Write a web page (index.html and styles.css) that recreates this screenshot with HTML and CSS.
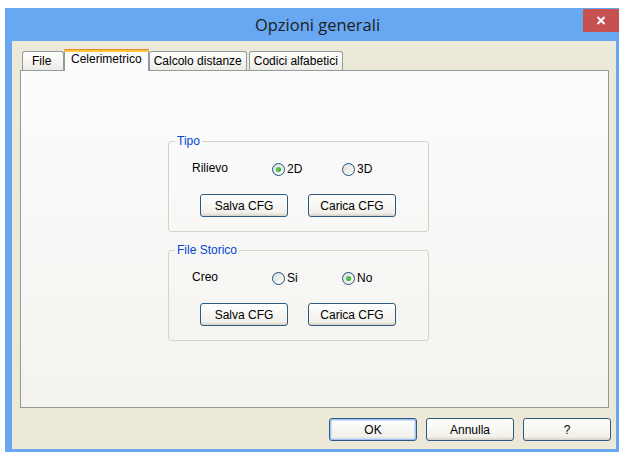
FILE: index.html
```html
<!DOCTYPE html>
<html lang="it">
<head>
<meta charset="utf-8">
<title>Opzioni generali</title>
<link rel="stylesheet" href="styles.css">
</head>
<body>
<div class="window">
  <div class="titlebar">
    <span class="title">Opzioni generali</span>
    <button class="close" aria-label="Chiudi">
      <svg width="10" height="9" viewBox="0 0 10 9"><path d="M1.5 1 L8.5 8 M8.5 1 L1.5 8" stroke="#fff" stroke-width="2" fill="none"/></svg>
    </button>
  </div>
  <div class="client">
    <div class="tabs">
      <div class="tab">File</div>
      <div class="tab active">Celerimetrico</div>
      <div class="tab">Calcolo distanze</div>
      <div class="tab">Codici alfabetici</div>
    </div>
    <div class="panel">
      <fieldset class="group">
        <legend>Tipo</legend>
        <div class="row">
          <span class="label">Rilievo</span>
          <span class="radio checked"><span class="dot"></span>2D</span>
          <span class="radio"><span class="dot"></span>3D</span>
        </div>
        <div class="buttons">
          <button class="btn">Salva CFG</button>
          <button class="btn">Carica CFG</button>
        </div>
      </fieldset>
      <fieldset class="group">
        <legend>File Storico</legend>
        <div class="row">
          <span class="label">Creo</span>
          <span class="radio"><span class="dot"></span>Si</span>
          <span class="radio checked"><span class="dot"></span>No</span>
        </div>
        <div class="buttons">
          <button class="btn">Salva CFG</button>
          <button class="btn">Carica CFG</button>
        </div>
      </fieldset>
    </div>
    <div class="footer">
      <button class="btn default">OK</button>
      <button class="btn">Annulla</button>
      <button class="btn">?</button>
    </div>
  </div>
</div>
</body>
</html>
```

FILE: styles.css
```css
html, body {
  margin: 0;
  padding: 0;
  background: #ffffff;
}

body {
  font-family: "Liberation Sans", Arial, sans-serif;
  font-size: 12px;
  color: #000;
}

/* dialog frame */
.window {
  margin: 8px 0 0 5px;
  width: 614px;
  height: 444px;
  box-sizing: border-box;
  background: #68a7f1;
  padding: 0 3px 3px 7px;
  display: flex;
  flex-direction: column;
}

.titlebar {
  position: relative;
  height: 33px;
  flex: none;
  display: flex;
  align-items: center;
  justify-content: center;
}

.title {
  font-family: "Open Sans", "Noto Sans", sans-serif;
  font-size: 16.5px;
  color: #1e1e1e;
  margin-left: 7px;
  margin-top: -1px;
}

.close {
  position: absolute;
  top: 1px;
  right: -3px;
  width: 36px;
  height: 23px;
  border: 0;
  padding: 0;
  background: #c75050;
  display: flex;
  align-items: center;
  justify-content: center;
}

.client {
  flex: 1;
  background: #ece9d8;
  padding: 8px 7px 0 8px;
  display: flex;
  flex-direction: column;
}

/* tab strip */
.tabs {
  display: flex;
  align-items: flex-end;
  height: 21px;
  padding-left: 2px;
  position: relative;
  z-index: 1;
}

.tab {
  height: 19px;
  box-sizing: border-box;
  border: 1px solid #919b9c;
  border-bottom: 0;
  border-radius: 3px 3px 0 0;
  background: linear-gradient(#ffffff, #ecebe6);
  padding: 0 4px;
  line-height: 18px;
  white-space: nowrap;
}

.tab:first-child {
  width: 42px;
  padding: 0 0 0 9px;
}

.tab:last-child {
  margin-left: 2px;
}

.tab.active {
  height: 22px;
  margin-bottom: -1px;
  background: #fcfcfe;
  border-top: 3px solid #ffc73c;
  padding: 0 6px;
  line-height: 15px;
  position: relative;
}

.tab.active::before {
  content: "";
  position: absolute;
  left: -1px;
  right: -1px;
  top: -3px;
  height: 1px;
  background: #e68b2c;
  border-radius: 3px 3px 0 0;
}

/* page body */
.panel {
  height: 338px;
  box-sizing: border-box;
  border: 1px solid #919b9c;
  background: linear-gradient(#fcfcfe, #f4f3ee);
  padding: 63px 0 0 147px;
  display: flex;
  flex-direction: column;
  gap: 11px;
}

.group {
  width: 261px;
  box-sizing: border-box;
  margin: 0;
  padding: 0 0 14px 8px;
  min-width: 0;
  border: 1px solid #d5d3c8;
  border-radius: 3px;
}

.group legend {
  color: #0046d5;
  font-size: 12px;
  line-height: 14px;
  padding: 0 2px;
  margin-left: -2px;
}

.row {
  display: flex;
  align-items: center;
  height: 16px;
  margin-top: 13px;
  padding-left: 15px;
}

.label {
  width: 80px;
  margin-top: -3px;
}

.radio {
  display: flex;
  align-items: center;
  width: 70px;
}

.dot {
  width: 13px;
  height: 13px;
  box-sizing: border-box;
  border: 1px solid #1c5180;
  border-radius: 50%;
  background: linear-gradient(135deg, #dcdcd7, #ffffff);
  margin-right: 2px;
  position: relative;
}

.radio.checked .dot::after {
  content: "";
  position: absolute;
  left: 3px;
  top: 3px;
  width: 5px;
  height: 5px;
  border-radius: 50%;
  background: radial-gradient(circle at 40% 40%, #5bd25b, #21a121);
}

.buttons {
  display: flex;
  gap: 20px;
  margin-top: 17px;
  padding-left: 23px;
}

.btn {
  width: 88px;
  height: 23px;
  box-sizing: border-box;
  border: 1px solid #2f5a80;
  border-radius: 3px;
  background: linear-gradient(#ffffff, #f1f0ea 85%, #d6d0c5);
  font-family: "Liberation Sans", Arial, sans-serif;
  font-size: 12px;
  color: #000;
  padding: 0;
}

.btn.default {
  box-shadow: inset 0 0 0 1px #a5c2f1, inset 0 0 0 2px #cfdff8;
}

.footer {
  display: flex;
  justify-content: flex-end;
  gap: 9px;
  margin-top: 10px;
  margin-right: -2px;
}
```
